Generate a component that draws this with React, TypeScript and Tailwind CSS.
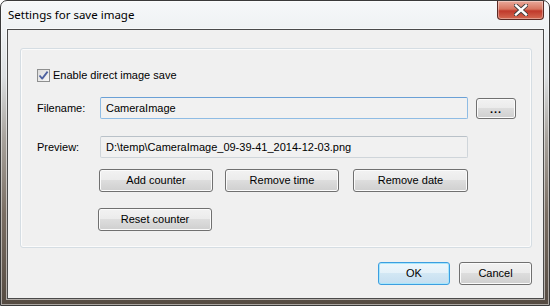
import type { ReactNode } from "react";

const ui = "font-['Liberation_Sans',Arial,sans-serif] text-[11px] text-black";

function Btn({ children, className = "", primary = false }: { children: ReactNode; className?: string; primary?: boolean }) {
  return (
    <button
      className={`flex items-center justify-center rounded-[3px] border ${ui} ${
        primary
          ? "border-[#3c9ee0] bg-[linear-gradient(to_bottom,#eef7fc_0%,#e4f1f9_48%,#d2e7f4_50%,#c5def0_100%)] shadow-[inset_0_0_0_1px_#a8e6fb]"
          : "border-[#707070] bg-[linear-gradient(to_bottom,#f2f2f2_0%,#ebebeb_48%,#dddddd_50%,#cfcfcf_100%)] shadow-[inset_0_0_0_1px_#fbfbfb]"
      } ${className}`}
    >
      {children}
    </button>
  );
}

function Field({ value, focused = false }: { value: string; focused?: boolean }) {
  return (
    <div
      className={`flex h-[22px] w-[368px] items-center rounded-[2px] border bg-[#f1f1f1] pl-[5px] ${ui} ${
        focused ? "border-[#8fbce4] border-t-[#6aa0d6]" : "border-[#cfd5da] border-t-[#b9c1c8]"
      }`}
    >
      {value}
    </div>
  );
}

function CheckBox() {
  return (
    <div className="flex h-[13px] w-[13px] items-center justify-center border border-[#8e8f8f] bg-[linear-gradient(135deg,#dcdcdc,#f7f7f7)]">
      <svg width="11" height="11" viewBox="0 0 11 11">
        <path d="M1.5 5.5 L4.2 8.6 L9.6 1.6" fill="none" stroke="#4d61a0" strokeWidth="1.8" strokeLinejoin="round" />
      </svg>
    </div>
  );
}

export default function App() {
  return (
    <div className="h-[306px] w-[550px] overflow-hidden bg-white">
      <div className="flex h-[306px] w-[550px] flex-col rounded-t-[7px] border border-[#3a3a3a] bg-[linear-gradient(to_bottom,#f6f8f9_0%,#eef1f3_10%,#dcdfe1_25%,#a8a39d_45%,#7a6e63_70%,#554b42_100%)] shadow-[inset_0_0_0_1px_rgba(255,255,255,0.5)]">
        {/* title bar */}
        <div className="flex h-[28px] shrink-0 items-start">
          <span className="ml-[7px] mt-[6px] font-['Noto_Sans',sans-serif] text-[11.5px] leading-[16px] text-black">
            Settings for save image
          </span>
          <div className="ml-auto mr-[5px] flex h-[19px] w-[47px] items-center justify-center rounded-b-[4px] border border-t-0 border-[#5a2a24] bg-[linear-gradient(to_bottom,#e9a99a_0%,#d7755f_45%,#c0392b_55%,#d46a52_100%)] shadow-[inset_0_0_0_1px_rgba(255,255,255,0.35)]">
            <svg width="14" height="12" viewBox="0 0 14 12">
              <path d="M2 1.5 L12 10.5 M12 1.5 L2 10.5" stroke="#3b3b3b" strokeWidth="4.2" strokeLinecap="square" />
              <path d="M2 1.5 L12 10.5 M12 1.5 L2 10.5" stroke="#ffffff" strokeWidth="2.4" strokeLinecap="square" />
            </svg>
          </div>
        </div>

        {/* client area */}
        <div className="ml-[6px] mr-[5px] flex h-[270px] flex-col border border-[#4a4a4a] bg-[#f0f0f0] shadow-[0_0_0_1px_rgba(255,255,255,0.55)]">
          <div className="ml-[12px] mr-[11px] mt-[18px] flex flex-col rounded-[3px] border border-[#d5dde3] pb-[16px] pl-[16px] pt-[20px] shadow-[inset_0_0_0_1px_#fbfbfb]">
            <div className="flex items-center gap-[3px]">
              <CheckBox />
              <span className={`${ui} leading-[13px]`}>Enable direct image save</span>
            </div>

            <div className="mt-[15px] flex items-center">
              <span className={`${ui} w-[63px]`}>Filename:</span>
              <Field value="CameraImage" focused />
              <Btn className="ml-[8px] h-[21px] w-[40px] pt-[2px] font-bold tracking-[1px] text-[#1a1a4a]">...</Btn>
            </div>

            <div className="mt-[17px] flex items-center">
              <span className={`${ui} w-[63px]`}>Preview:</span>
              <Field value="D:\temp\CameraImage_09-39-41_2014-12-03.png" />
            </div>

            <div className="mt-[11px] flex">
              <Btn className="ml-[62px] h-[23px] w-[114px]">Add counter</Btn>
              <Btn className="ml-[12px] h-[23px] w-[114px]">Remove time</Btn>
              <Btn className="ml-[14px] h-[23px] w-[115px]">Remove date</Btn>
            </div>

            <div className="mt-[16px] flex">
              <Btn className="ml-[61px] h-[23px] w-[114px]">Reset counter</Btn>
            </div>
          </div>

          <div className="mr-[11px] mt-[14px] flex justify-end gap-[9px]">
            <Btn primary className="h-[23px] w-[72px]">OK</Btn>
            <Btn className="h-[23px] w-[73px]">Cancel</Btn>
          </div>
        </div>
      </div>
    </div>
  );
}
